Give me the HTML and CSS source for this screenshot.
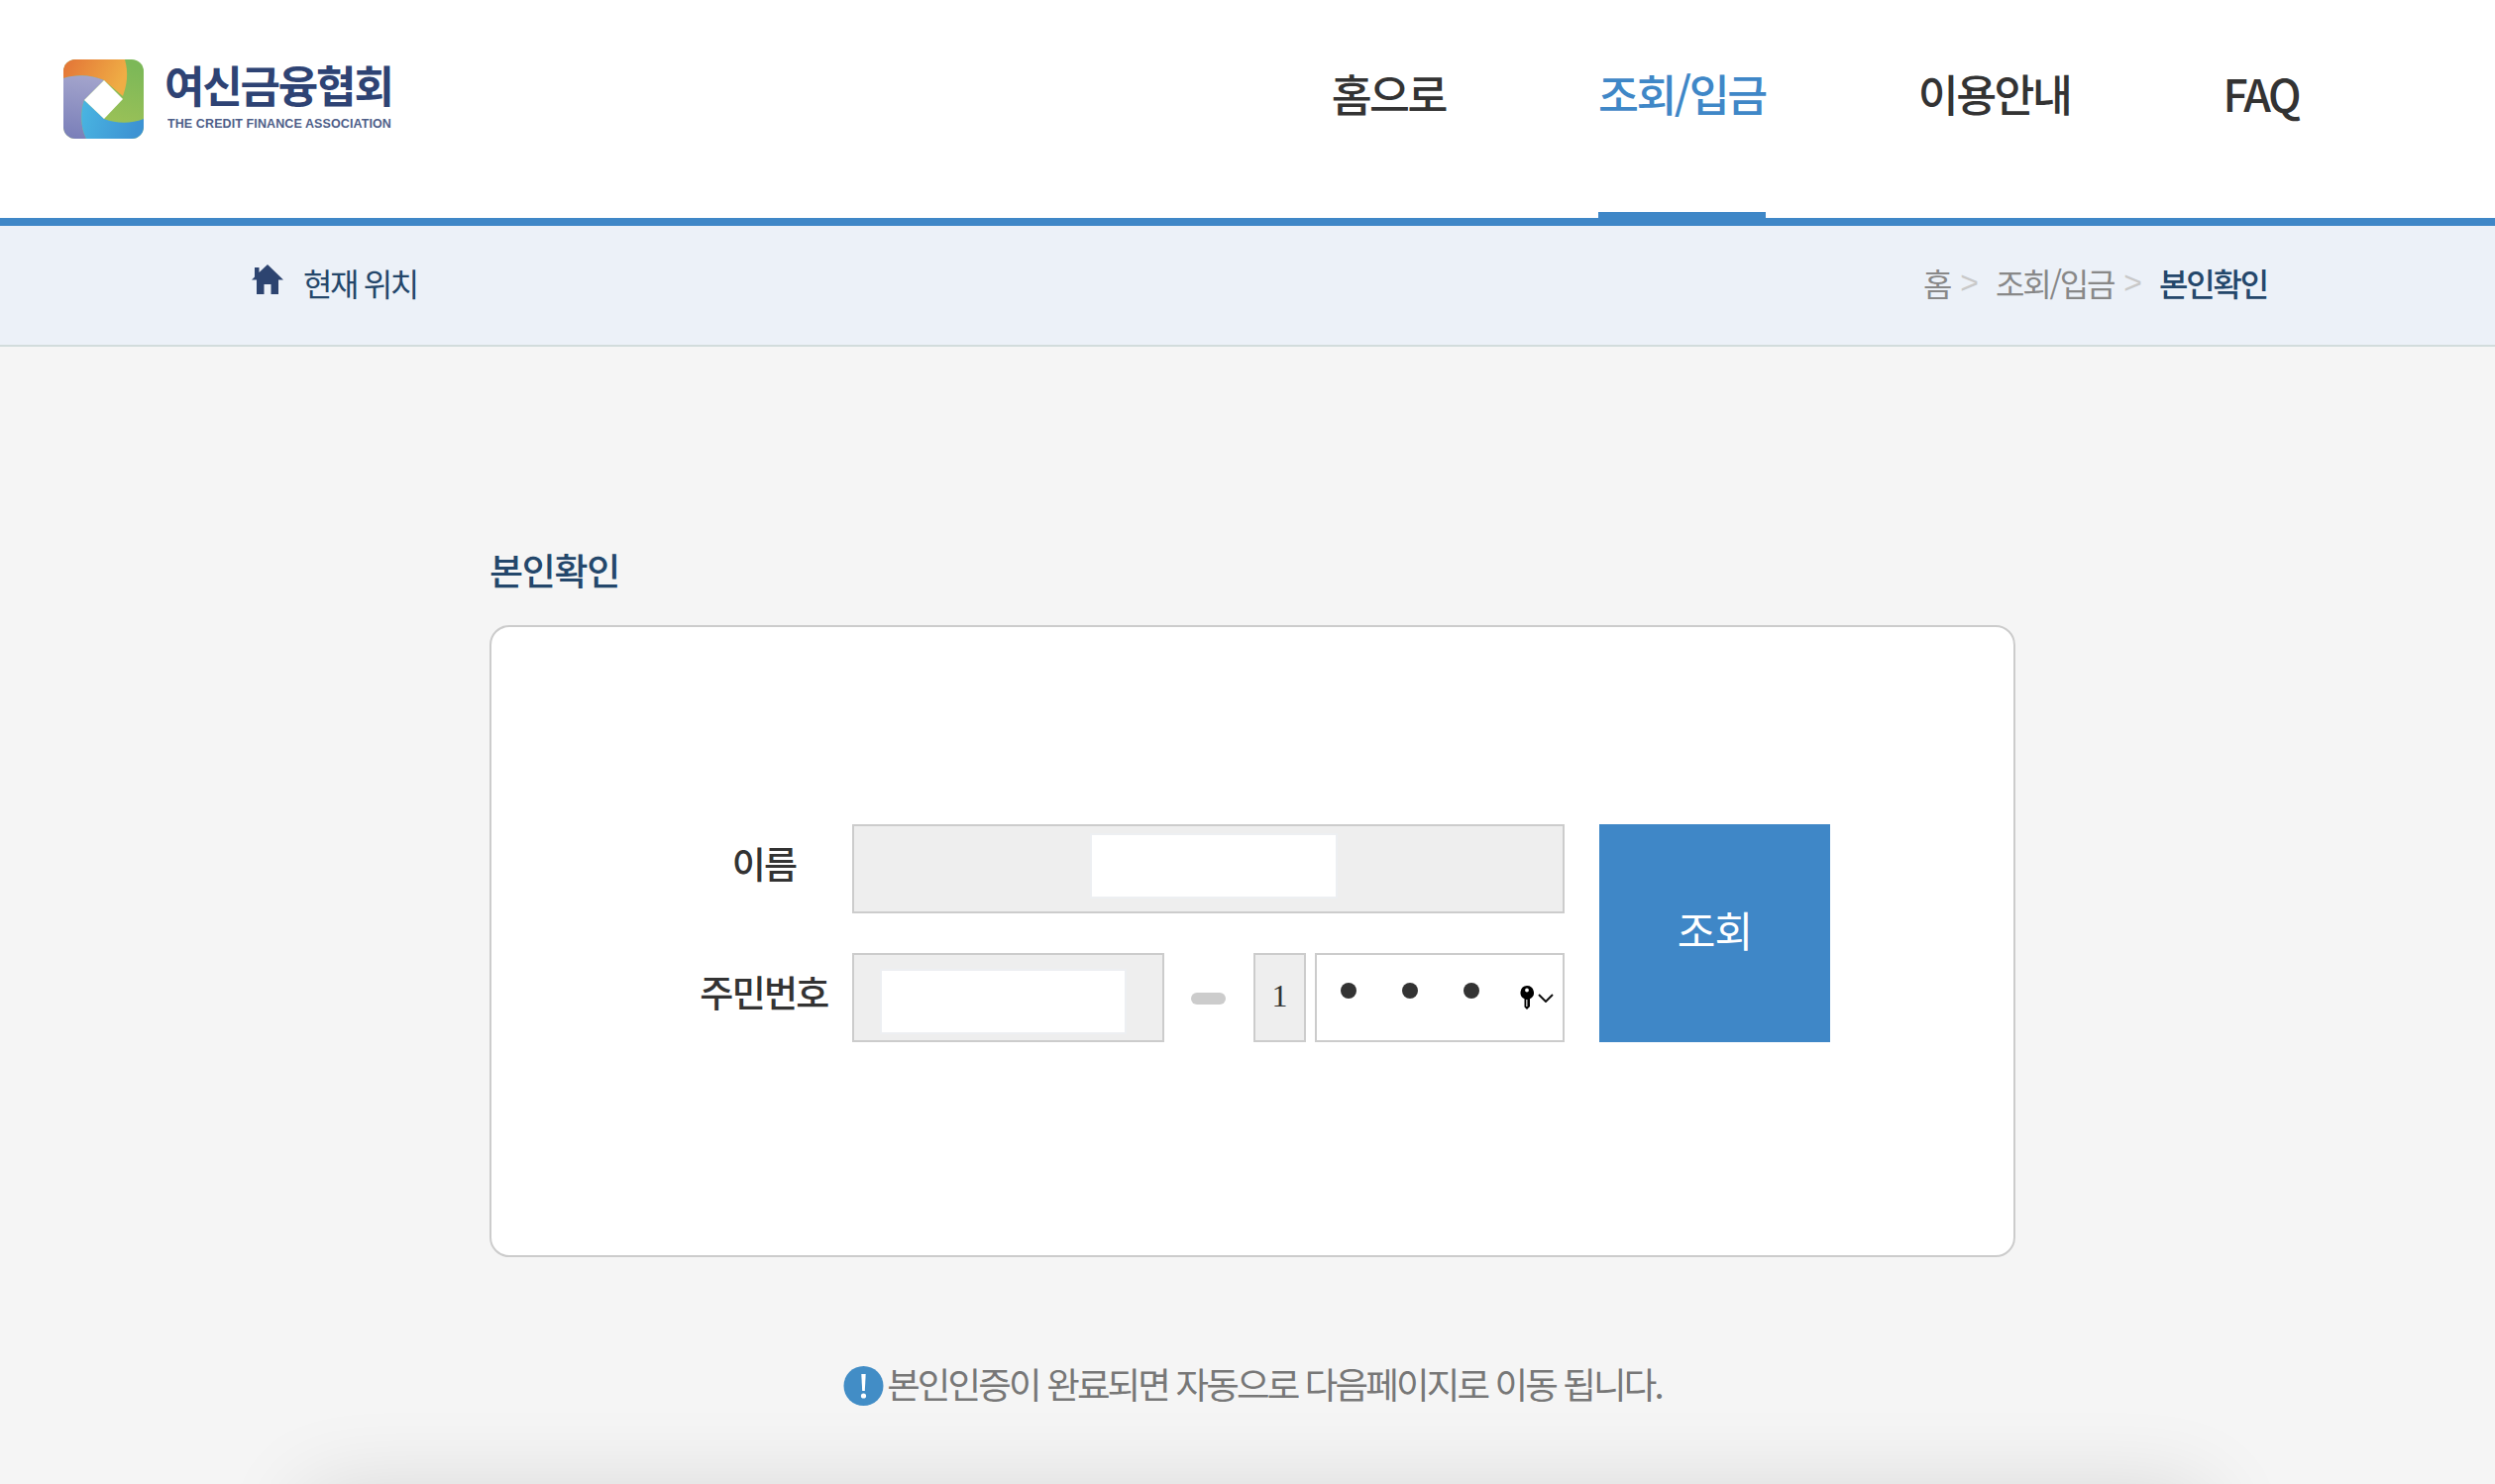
FILE: index.html
```html
<!DOCTYPE html>
<html lang="ko">
<head>
<meta charset="utf-8">
<title>본인확인</title>
<link rel="stylesheet" href="styles.css">
</head>
<body>
<div class="page">
  <header class="header">
    <a class="logo">
      <svg class="logo-mark" viewBox="0 0 81 80" width="81" height="80" aria-hidden="true">
        <defs>
          <linearGradient id="gOrange" x1="0" y1="0" x2="1" y2="0.3"><stop offset="0" stop-color="#e37336"/><stop offset="1" stop-color="#efad45"/></linearGradient>
          <linearGradient id="gGreen" x1="0.6" y1="0" x2="0.3" y2="1"><stop offset="0" stop-color="#7cb858"/><stop offset="1" stop-color="#a5c457"/></linearGradient>
          <linearGradient id="gBlue" x1="0" y1="0" x2="1" y2="0.2"><stop offset="0" stop-color="#4ab6e2"/><stop offset="1" stop-color="#3d93d3"/></linearGradient>
          <linearGradient id="gPurple" x1="0.5" y1="0" x2="0.4" y2="1"><stop offset="0" stop-color="#a3a4cc"/><stop offset="1" stop-color="#7a7fb9"/></linearGradient>
          <clipPath id="logoClip"><rect width="81" height="80" rx="12"/></clipPath>
        </defs>
        <g clip-path="url(#logoClip)">
          <rect width="81" height="80" fill="url(#gGreen)"/>
          <path d="M0 0H62C66 14 64 26 60 37L41 21C28 15 12 15 0 19Z" fill="url(#gOrange)"/>
          <path d="M0 19C12 15 28 15 41 21L21 41C17 52 17 68 23 80H0Z" fill="url(#gPurple)"/>
          <path d="M21 41L41 60C54 65 68 65 81 60V80H23C17 68 17 52 21 41Z" fill="url(#gBlue)"/>
          <path d="M41 21L60 40L41 60L21 41Z" fill="#fff"/>
        </g>
      </svg>
      <span class="logo-text">
        <span class="logo-name">여신금융협회</span>
        <span class="logo-sub">THE CREDIT FINANCE ASSOCIATION</span>
      </span>
    </a>
    <nav class="nav">
      <a class="nav-item">홈으로</a>
      <a class="nav-item is-active">조회/입금</a>
      <a class="nav-item">이용안내</a>
      <a class="nav-item">FAQ</a>
    </nav>
  </header>

  <div class="location">
    <div class="location-current">
      <svg class="home-icon" viewBox="0 0 32 30" width="32" height="30" aria-hidden="true">
        <path d="M16 0L32 15.5H27V30H19.500V20H12.500V30H5V15.500H0L3 12.500V3H7.500V8Z" fill="#2d4470"/>
      </svg>
      <span>현재 위치</span>
    </div>
    <div class="crumbs">
      <span>홈</span>
      <span class="crumb-sep">&gt;</span>
      <span>조회/입금</span>
      <span class="crumb-sep">&gt;</span>
      <strong class="crumb-now">본인확인</strong>
    </div>
  </div>

  <main class="main">
    <h1 class="title">본인확인</h1>
    <section class="card">
      <form class="form">
        <div class="fields">
          <div class="row">
            <label class="label">이름</label>
            <div class="box box-name"><input class="input input-name" type="text"></div>
          </div>
          <div class="row">
            <label class="label">주민번호</label>
            <div class="box box-id"><input class="input input-id" type="text"></div>
            <span class="dash"></span>
            <div class="box box-first">1</div>
            <div class="box box-secret">
              <span class="dots"><i class="dot"></i><i class="dot"></i><i class="dot"></i></span>
              <svg class="key" viewBox="0 0 14 24" width="14" height="24" aria-hidden="true">
                <path d="M7 0A7 7 0 0 1 10 13.300V21L7 24L4.500 21.500V13.300A7 7 0 0 1 7 0ZM7 2.600A1.900 1.900 0 1 0 7 6.400A1.900 1.900 0 0 0 7 2.600ZM6.300 14V21H7.400V14Z" fill="#000" fill-rule="evenodd"/>
              </svg>
              <svg class="chevron" viewBox="0 0 16 9" width="16" height="9" aria-hidden="true">
                <path d="M1 1L8 8L15 1" fill="none" stroke="#111" stroke-width="2"/>
              </svg>
            </div>
          </div>
        </div>
        <button class="submit" type="button">조회</button>
      </form>
    </section>
    <p class="note">
      <svg class="note-icon" viewBox="0 0 40 40" width="41" height="40" aria-hidden="true">
        <circle cx="20" cy="20" r="20" fill="#428dc6"/>
        <path d="M17.800 8H22.200L21.300 25H18.700Z" fill="#fff"/>
        <circle cx="20" cy="30" r="2.600" fill="#fff"/>
      </svg>
      <span>본인인증이 완료되면 자동으로 다음페이지로 이동 됩니다.</span>
    </p>
  </main>
  <footer class="footer"></footer>
</div>
</body>
</html>
```

FILE: styles.css
```css
* { box-sizing: border-box; }

html, body {
  margin: 0;
  height: 100%;
}

body {
  background: #f5f5f5;
  font-family: "Noto Sans CJK KR", "Noto Sans", sans-serif;
  color: #333;
}

.page {
  height: 1498px;
  overflow: hidden;
}

/* header */
.header {
  display: flex;
  justify-content: space-between;
  height: 228px;
  padding: 0 198px 0 64px;
  background: #fff;
  border-bottom: 8px solid #3f87c7;
}

.logo {
  display: flex;
  align-items: flex-start;
  gap: 21px;
  padding-top: 60px;
}

.logo-mark { display: block; }

.logo-text {
  display: flex;
  flex-direction: column;
  color: #2e4374;
}

.logo-name {
  font-size: 44px;
  line-height: 50px;
  font-weight: 700;
  letter-spacing: -2.200px;
  white-space: nowrap;
}

.logo-sub {
  margin: 8px 0 0 3px;
  font-family: "Liberation Sans", sans-serif;
  font-size: 12.500px;
  line-height: 14px;
  font-weight: 700;
  letter-spacing: 0.100px;
  white-space: nowrap;
  opacity: 0.85;
}

.nav {
  display: flex;
  gap: 154px;
}

.nav-item {
  display: flex;
  align-items: flex-start;
  height: 220px;
  padding-top: 62px;
  font-size: 44.500px;
  line-height: 64px;
  font-weight: 500;
  letter-spacing: -2.500px;
  color: #333;
  white-space: nowrap;
}

.is-active {
  color: #3f87c7;
  border-bottom: 6px solid #3f87c7;
}

/* location bar */
.location {
  display: flex;
  justify-content: space-between;
  align-items: center;
  height: 122px;
  padding: 0 230px 6px 254px;
  background: #ecf1f8;
  border-bottom: 2px solid #d2dcdc;
}

.location-current {
  display: flex;
  align-items: center;
  gap: 20px;
  font-size: 32px;
  line-height: 46px;
  letter-spacing: -2.400px;
  color: #24476b;
}

.home-icon { display: block; margin-top: -6px; }

.crumbs {
  display: flex;
  align-items: center;
  gap: 10px;
  font-size: 32px;
  line-height: 46px;
  letter-spacing: -2.200px;
  color: #888;
}

.crumb-sep {
  margin-right: 7px;
  color: #c9c9c9;
  font-family: "Liberation Sans", sans-serif;
  font-size: 32px;
  letter-spacing: 0;
}

.crumb-now {
  font-weight: 500;
  color: #24476b;
}

/* main */
.main {
  width: 1540px;
  margin-left: 494px;
  padding-top: 200px;
}

.title {
  margin: 0 0 31px;
  font-size: 37px;
  line-height: 50px;
  font-weight: 500;
  letter-spacing: -1.300px;
  color: #24476b;
}

.card {
  height: 638px;
  padding: 199px 0 0 199px;
  background: #fff;
  border: 2px solid #ccc;
  border-radius: 20px;
}

.form {
  display: flex;
  gap: 35px;
}

.fields {
  display: flex;
  flex-direction: column;
  gap: 40px;
  width: 884px;
}

.row {
  display: flex;
  height: 90px;
}

.label {
  width: 152px;
  margin-right: 13px;
  font-size: 37px;
  line-height: 78px;
  font-weight: 500;
  letter-spacing: -1.700px;
  text-align: center;
  color: #333;
  white-space: nowrap;
}

.box {
  height: 90px;
  border: 2px solid #ccc;
  background: #eee;
}

.box-name {
  width: 719px;
  padding: 7px 0 0 238px;
}

.box-id {
  width: 315px;
  padding: 14px 0 0 26px;
}

.input {
  display: block;
  padding: 0;
  background: #fff;
  border: 2px solid #edeff2;
  outline: 0;
}

.input-name { width: 250px; height: 66px; }
.input-id { width: 249px; height: 66px; }

.dash {
  width: 35px;
  height: 12px;
  margin: 40px 28px 0 27px;
  border-radius: 6px;
  background: #ccc;
}

.box-first {
  width: 53px;
  margin-right: 9px;
  font-family: "Liberation Serif", serif;
  font-size: 32px;
  line-height: 83px;
  text-align: center;
  color: #333;
}

.box-secret {
  position: relative;
  display: flex;
  align-items: flex-start;
  width: 252px;
  padding: 28px 0 0 24px;
  background: #fff;
}

.dots {
  display: flex;
  gap: 46px;
}

.dot {
  display: block;
  width: 16px;
  height: 16px;
  border-radius: 50%;
  background: #333;
}

.key {
  display: block;
  margin: 3px 0 0 41px;
}

.chevron {
  display: block;
  margin: 11px 0 0 4px;
}

.submit {
  width: 233px;
  height: 220px;
  padding: 0 0 9px;
  background: #3f87c7;
  border: 0;
  font-family: inherit;
  font-size: 42px;
  font-weight: 400;
  letter-spacing: -1px;
  color: #fff;
}

.note {
  display: flex;
  justify-content: center;
  align-items: center;
  gap: 3px;
  height: 50px;
  margin: 103px 0 0;
  font-size: 36.500px;
  line-height: 50px;
  letter-spacing: -2.850px;
  color: #777;
  white-space: nowrap;
}

.note-icon { display: block; margin-top: 4px; }

.footer {
  height: 200px;
  width: 1915px;
  margin: 86px 0 0 310px;
  background: #e6e6e6;
  box-shadow: 0 0 90px rgba(0, 0, 0, 0.14);
}
```
